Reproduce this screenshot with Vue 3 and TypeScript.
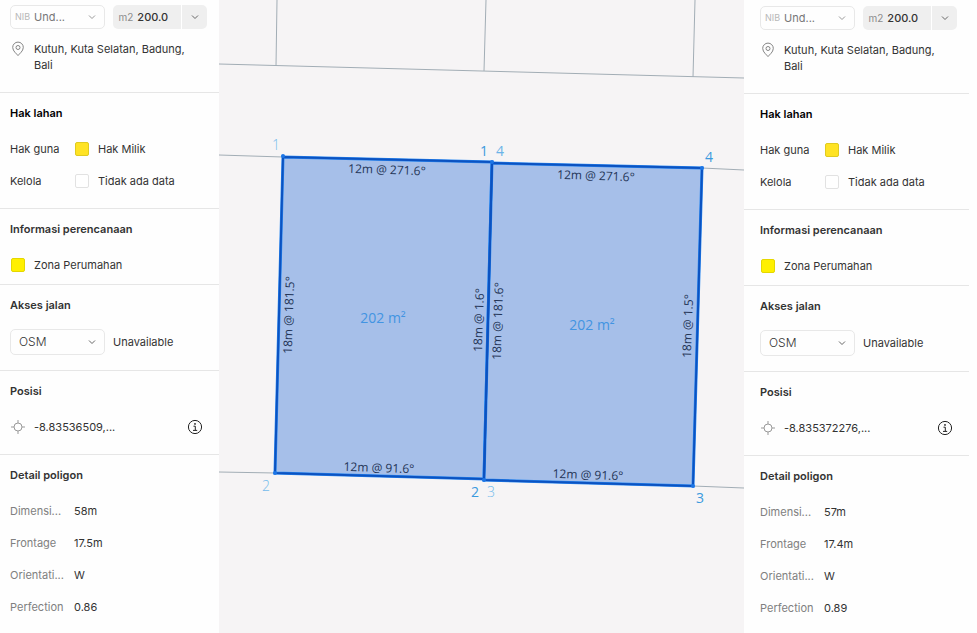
<script setup lang="ts">
interface Detail {
  label: string
  value: string
}

interface Panel {
  id: string
  side: 'left' | 'right'
  coordinates: string
  details: Detail[]
}

interface MapLabel {
  text: string
  x: number
  y: number
  angle: number
}

interface VertexLabel {
  text: string
  x: number
  y: number
  tone: 'light' | 'mid' | 'strong'
}

const leftPanel: Panel = {
  id: 'a',
  side: 'left',
  coordinates: '-8.83536509,...',
  details: [
    { label: 'Dimensi...', value: '58m' },
    { label: 'Frontage', value: '17.5m' },
    { label: 'Orientati...', value: 'W' },
    { label: 'Perfection', value: '0.86' },
  ],
}

const rightPanel: Panel = {
  id: 'b',
  side: 'right',
  coordinates: '-8.835372276,...',
  details: [
    { label: 'Dimensi...', value: '57m' },
    { label: 'Frontage', value: '17.4m' },
    { label: 'Orientati...', value: 'W' },
    { label: 'Perfection', value: '0.89' },
  ],
}

// The map sits between the two panels; order here is the visual order.
const columns: (Panel | null)[] = [leftPanel, null, rightPanel]

const boundaries: string[] = [
  'M0 64 L525 78',
  'M58 0 L57 66',
  'M267 0 L265 71',
  'M476 0 L474 77',
  'M0 155 L64 157',
  'M483 168 L525 170',
  'M0 472 L56 473',
  'M474 486 L525 488',
]

const parcels: string[] = [
  '64,157 273,162 265,479 56,473',
  '273,163 483,168 474,486 265,480',
]

const vertices: [number, number][] = [
  [64, 156],
  [273, 162],
  [483, 168],
  [474, 486],
  [265, 480],
  [56, 473],
]

const edgeLabels: MapLabel[] = [
  { text: '12m @ 271.6°', x: 168, y: 169, angle: 2 },
  { text: '12m @ 271.6°', x: 377, y: 175, angle: 2 },
  { text: '12m @ 91.6°', x: 160, y: 467, angle: 2 },
  { text: '12m @ 91.6°', x: 369, y: 474, angle: 2 },
  { text: '18m @ 181.5°', x: 69, y: 315, angle: -88 },
  { text: '18m @ 1.6°', x: 259, y: 320, angle: -88 },
  { text: '18m @ 181.6°', x: 278, y: 321, angle: -88 },
  { text: '18m @ 1.5°', x: 468, y: 326, angle: -88 },
]

const areaLabels: MapLabel[] = [
  { text: '202 m²', x: 164, y: 318, angle: 0 },
  { text: '202 m²', x: 373, y: 325, angle: 0 },
]

const vertexLabels: VertexLabel[] = [
  { text: '1', x: 57, y: 145, tone: 'light' },
  { text: '1', x: 265, y: 151, tone: 'strong' },
  { text: '4', x: 281, y: 151, tone: 'mid' },
  { text: '4', x: 490, y: 157, tone: 'strong' },
  { text: '2', x: 47, y: 486, tone: 'light' },
  { text: '2', x: 256, y: 492, tone: 'strong' },
  { text: '3', x: 272, y: 492, tone: 'light' },
  { text: '3', x: 481, y: 498, tone: 'strong' },
]
</script>

<template>
  <main class="layout">
    <template v-for="(panel, index) in columns" :key="index">
      <aside v-if="panel" class="panel" :class="`panel-${panel.side}`">
        <header class="head">
          <div class="controls">
            <div class="picker outlined">
              <label class="prefix faint" :for="`nib-${panel.id}`">NIB</label>
              <select :id="`nib-${panel.id}`" class="select muted">
                <option>Und...</option>
              </select>
              <svg class="chevron" viewBox="0 0 8 6" aria-hidden="true"><path d="M1 1.5 4 4.5 7 1.5" /></svg>
            </div>
            <div class="picker filled">
              <label class="prefix" :for="`area-${panel.id}`">m2</label>
              <input :id="`area-${panel.id}`" class="number" type="text" value="200.0" />
              <button class="unit" type="button">
                <svg class="chevron dark" viewBox="0 0 8 6" aria-hidden="true"><path d="M1 1.5 4 4.5 7 1.5" /></svg>
              </button>
            </div>
          </div>
          <div class="address">
            <svg class="icon pin" viewBox="0 0 16 16" aria-hidden="true">
              <path d="M8 14.6 C6.8 12.8 2.7 10.2 2.7 6.4 A5.3 5.3 0 0 1 13.3 6.4 C13.3 10.2 9.2 12.8 8 14.6 Z" />
              <circle cx="8" cy="6.5" r="2" />
            </svg>
            <p>Kutuh, Kuta Selatan, Badung, Bali</p>
          </div>
        </header>

        <section class="section">
          <h2 class="black">Hak lahan</h2>
          <div class="row">
            <span class="land-label">Hak guna</span>
            <span class="swatch gold"></span>
            <span>Hak Milik</span>
          </div>
          <div class="row">
            <span class="land-label">Kelola</span>
            <span class="swatch empty"></span>
            <span>Tidak ada data</span>
          </div>
        </section>

        <section class="section compact">
          <h2>Informasi perencanaan</h2>
          <div class="row">
            <span class="swatch lemon"></span>
            <span>Zona Perumahan</span>
          </div>
        </section>

        <section class="section">
          <h2 :id="`road-${panel.id}`">Akses jalan</h2>
          <div class="row tall">
            <div class="picker outlined road">
              <select class="select" :aria-labelledby="`road-${panel.id}`">
                <option>OSM</option>
              </select>
              <svg class="chevron dark" viewBox="0 0 8 6" aria-hidden="true"><path d="M1 1.5 4 4.5 7 1.5" /></svg>
            </div>
            <span>Unavailable</span>
          </div>
        </section>

        <section class="section">
          <h2>Posisi</h2>
          <div class="row">
            <svg class="icon target" viewBox="0 0 16 16" aria-hidden="true">
              <circle cx="8" cy="8" r="4" />
              <path d="M8 1v3 M8 12v3 M1 8h3 M12 8h3" />
            </svg>
            <span>{{ panel.coordinates }}</span>
            <button class="info" type="button">
              <svg viewBox="0 0 16 16" aria-hidden="true">
                <circle cx="8" cy="8" r="6.6" />
                <path d="M6.5 7.2h1.8v4 M6 11.4h4.2" />
                <circle class="dot" cx="8" cy="4.9" r="0.9" />
              </svg>
            </button>
          </div>
        </section>

        <section class="section">
          <h2>Detail poligon</h2>
          <dl>
            <div v-for="detail in panel.details" :key="detail.label" class="row">
              <dt>{{ detail.label }}</dt>
              <dd>{{ detail.value }}</dd>
            </div>
          </dl>
        </section>
      </aside>

      <div v-else class="map">
        <svg viewBox="0 0 525 633" preserveAspectRatio="xMidYMin slice">
          <path v-for="d in boundaries" :key="d" class="boundary" :d="d" />
          <polygon v-for="points in parcels" :key="points" class="parcel" :points="points" />
          <polygon v-for="points in parcels" :key="`line-${points}`" class="outline" :points="points" />
          <circle v-for="[cx, cy] in vertices" :key="`${cx}-${cy}`" class="vertex" :cx="cx" :cy="cy" r="2" />
          <text
            v-for="label in edgeLabels"
            :key="`${label.x}-${label.y}`"
            class="edge-label"
            :transform="`translate(${label.x} ${label.y}) rotate(${label.angle})`"
            dy="5"
          >{{ label.text }}</text>
          <text
            v-for="label in areaLabels"
            :key="`${label.x}-${label.y}`"
            class="area-label"
            :x="label.x"
            :y="label.y"
            dy="5"
          >{{ label.text }}</text>
          <text
            v-for="label in vertexLabels"
            :key="`${label.x}-${label.y}`"
            class="vertex-label"
            :class="label.tone"
            :x="label.x"
            :y="label.y"
            dy="5"
          >{{ label.text }}</text>
        </svg>
      </div>
    </template>
  </main>
</template>

<style>
body {
  background: #fefefe;
}
</style>

<style scoped>
.layout {
  display: grid;
  grid-template-columns: 219px minmax(0, 1fr) 233px;
  min-height: 100vh;
  font-family: Inter, "Liberation Sans", sans-serif;
  font-size: 11px;
  line-height: 16px;
  color: #333;
}

.layout * {
  box-sizing: border-box;
}

.panel {
  background: #fefefe;
}

.panel-right {
  padding: 1px 8px 0 0;
}

.head,
.section {
  padding: 0 12px 11px 10px;
}

.panel-right .head,
.panel-right .section {
  padding-left: 16px;
}

.head {
  padding-top: 5px;
  padding-bottom: 19px;
}

.section {
  border-top: 1px solid #e6e6e6;
}

.section:last-child {
  padding-bottom: 0;
}

.compact {
  padding-bottom: 3px;
}

.controls {
  display: grid;
  grid-template-columns: 1fr 1fr;
  gap: 8px;
}

.picker {
  display: flex;
  align-items: center;
  position: relative;
  height: 24px;
  border-radius: 5px;
  overflow: hidden;
}

.outlined {
  border: 1px solid #e8e8e8;
}

.filled {
  background: #efefef;
}

.prefix {
  flex: none;
  padding-left: 6px;
  font-size: 10px;
  color: #8c8c8c;
}

.faint {
  padding-left: 4px;
  font-size: 9px;
  color: #b8b8b8;
}

.select,
.number,
.unit,
.info {
  margin: 0;
  border: 0;
  background: transparent;
  font: inherit;
  color: inherit;
}

.select {
  flex: 1;
  min-width: 0;
  height: 100%;
  padding: 0 20px 0 4px;
  appearance: none;
}

.muted {
  color: #777;
}

.chevron {
  position: absolute;
  right: 8px;
  width: 8px;
  height: 6px;
  fill: none;
  stroke: #999;
  pointer-events: none;
}

.chevron.dark {
  stroke: #666;
}

.number {
  flex: 1;
  min-width: 0;
  padding: 0 0 0 4px;
  font-weight: 500;
}

.unit {
  display: grid;
  place-items: center;
  width: 26px;
  height: 100%;
  padding: 0;
  border-left: 1px solid #fff;
}

.unit .chevron {
  position: static;
}

.address {
  display: flex;
  gap: 8px;
  margin-top: 12px;
  padding-right: 12px;
}

.address p {
  margin: 0;
}

.icon {
  flex: none;
  width: 16px;
  height: 16px;
  fill: none;
  stroke: #858585;
}

.target {
  stroke: #999;
}

h2 {
  margin: 0;
  font-size: 11px;
  font-weight: 600;
  line-height: 40px;
}

.black {
  color: #000;
}

.row {
  display: flex;
  align-items: center;
  gap: 8px;
  height: 32px;
  white-space: nowrap;
}

.tall {
  height: 34px;
}

.land-label {
  width: 56px;
}

.swatch {
  flex: none;
  width: 14px;
  height: 14px;
  margin: 0 1px;
  border: 1px solid #e0cb20;
  border-radius: 2px;
}

.gold {
  background: #ffe324;
}

.lemon {
  border-color: #e5d700;
  background: #fff000;
}

.empty {
  border-color: #e2e2e2;
  background: #fff;
}

.road {
  width: 95px;
  height: 26px;
}

.road .select {
  padding-left: 8px;
  font-size: 12px;
  font-weight: 300;
}

.info {
  width: 16px;
  height: 16px;
  margin-left: auto;
  margin-right: 4px;
  padding: 0;
}

.info svg {
  display: block;
  fill: none;
  stroke: #222;
}

.info .dot {
  fill: #222;
  stroke: none;
}

dl,
dd {
  margin: 0;
}

dt {
  width: 56px;
  color: #808080;
}

.map {
  position: relative;
  background: #f6f4f5;
  overflow: hidden;
}

.map svg {
  position: absolute;
  inset: 0;
  width: 100%;
  height: 100%;
}

.boundary {
  fill: none;
  stroke: #a2adb5;
}

.parcel {
  fill: #a6bfe9;
  stroke: #2787f2;
  stroke-width: 3;
}

.outline {
  fill: none;
  stroke: #0c52c0;
  stroke-width: 2;
}

.vertex {
  fill: #1c75e6;
}

text {
  font-family: "Open Sans", "Noto Sans", sans-serif;
  text-anchor: middle;
}

.edge-label {
  font-size: 12px;
  fill: #243557;
}

.area-label {
  font-size: 14px;
  fill: #4294e2;
}

.vertex-label {
  font-size: 14px;
}

.light {
  fill: #74bbec;
  font-weight: 300;
}

.mid {
  fill: #6bb3e8;
}

.strong {
  fill: #3b9ade;
}
</style>
